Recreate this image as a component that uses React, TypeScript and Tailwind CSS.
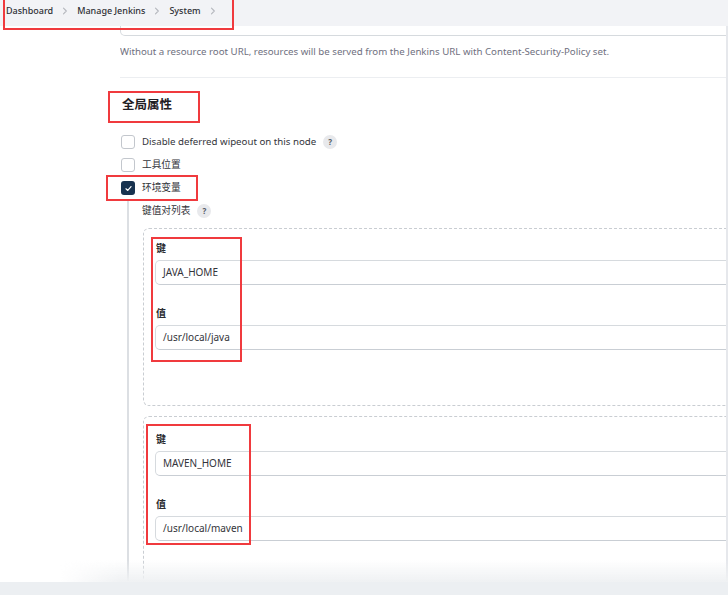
import React from "react";

const font = "font-['Noto_Sans','Noto_Sans_CJK_SC',sans-serif]";

function Chevron() {
  return (
    <svg width="8" height="8" viewBox="0 0 8 8" className="shrink-0">
      <path d="M2.5 1.2 L5.3 4 L2.5 6.8" fill="none" stroke="#b4b7bd" strokeWidth="1.1" strokeLinecap="round" strokeLinejoin="round" />
    </svg>
  );
}

function Help() {
  return (
    <span className="ml-[7px] inline-flex h-[14px] w-[14px] items-center justify-center rounded-full bg-[#e8e9ec] text-[8px] font-bold leading-none text-[#555b63]">
      ?
    </span>
  );
}

function Checkbox({ checked, label, help }: { checked?: boolean; label: string; help?: boolean }) {
  return (
    <div className="flex h-[14px] items-center">
      {checked ? (
        <span className="flex h-[14px] w-[14px] items-center justify-center rounded-[3px] bg-[#17324f]">
          <svg width="9" height="9" viewBox="0 0 10 10">
            <path d="M2.2 5.3 L4.2 7.2 L7.8 2.8" fill="none" stroke="#fff" strokeWidth="1.3" strokeLinecap="round" strokeLinejoin="round" />
          </svg>
        </span>
      ) : (
        <span className="h-[14px] w-[14px] rounded-[3px] border border-[#c3c7cd] bg-white" />
      )}
      <span className="ml-[7px] text-[9.7px] leading-[14px] text-[#33343a]">{label}</span>
      {help && <Help />}
    </div>
  );
}

function Field({ label, value }: { label: string; value: string }) {
  return (
    <div>
      <div className="ml-[1px] text-[10px] font-semibold leading-[12px] text-[#2b2c31]">{label}</div>
      <div className="mt-[6px] flex h-[25px] items-center rounded-[5px] border border-[#d6dade] border-b-[#c9ced4] bg-white pl-[7px] text-[10px] text-[#33343a]">
        {value}
      </div>
    </div>
  );
}

function Pair({ k, v, top, bottom }: { k: string; v: string; top: string; bottom: string }) {
  return (
    <div className={`rounded-[6px] border border-dashed border-[#c9cdd2] pl-[11px] pr-[11px] ${top} ${bottom}`}>
      <Field label="键" value={k} />
      <div className="mt-[22px]">
        <Field label="值" value={v} />
      </div>
    </div>
  );
}

export default function App() {
  const crumbs = ["Dashboard", "Manage Jenkins", "System"];
  return (
    <div className={`relative flex h-[595px] w-[728px] flex-col overflow-hidden bg-white ${font}`}>
      {/* breadcrumb bar */}
      <div className="flex h-[26px] shrink-0 items-center gap-[8px] bg-[#f2f3f6] pb-[4px] pl-[6px] text-[9px] font-medium text-[#2f3035]">
        {crumbs.map((c) => (
          <React.Fragment key={c}>
            <span>{c}</span>
            <Chevron />
          </React.Fragment>
        ))}
      </div>

      <div className="flex min-h-0 flex-1">
        <div className="w-[120px] shrink-0" />
        <div className="min-w-0 flex-1 overflow-hidden border-r-2 border-[#e6e8ec]">
          {/* tail of the resource root URL input */}
          <div className="-mr-[20px] h-[10px] rounded-b-[5px] border border-t-0 border-[#d6dade]" />
          <p className="mt-[10px] whitespace-nowrap text-[9.7px] leading-[12px] text-[#6f7080]">
            Without a resource root URL, resources will be served from the Jenkins URL with Content-Security-Policy set.
          </p>
          <div className="-ml-[3px] mt-[19px] h-px bg-[#eceef1]" />

          <h2 className="ml-[2px] mt-[18px] text-[12.5px] font-bold leading-[18px] text-[#1f2024]">全局属性</h2>

          <div className="ml-px mt-[21px] flex flex-col gap-[9px]">
            <Checkbox label="Disable deferred wipeout on this node" help />
            <Checkbox label="工具位置" />
            <Checkbox label="环境变量" checked />
          </div>

          {/* nested environment variable list */}
          <div className="-mr-[30px] ml-[7px] mt-[5px] border-l-2 border-[#dcdfe3] pl-[14px] pt-[4px]">
            <div className="-ml-[1px] flex h-[14px] items-center">
              <span className="text-[9.7px] leading-[14px] text-[#33343a]">键值对列表</span>
              <Help />
            </div>
            <div className="mt-[10px]">
              <Pair k="JAVA_HOME" v="/usr/local/java" top="pt-[13px]" bottom="pb-[55px]" />
            </div>
            <div className="mt-[10px]">
              <Pair k="MAVEN_HOME" v="/usr/local/maven" top="pt-[16px]" bottom="pb-[60px]" />
            </div>
          </div>
        </div>
      </div>

      {/* sticky save bar */}
      <div className="pointer-events-none absolute bottom-[13px] left-[60px] right-0 h-[22px] bg-gradient-to-b from-transparent to-[#eff1f3] [mask-image:linear-gradient(to_right,transparent,black_60px)]" />
      <div className="absolute bottom-0 left-0 right-0 h-[13px] bg-[#eceff2]" />

      {/* highlight boxes */}
      <div className="pointer-events-none absolute left-[3px] top-[-2px] h-[32px] w-[231px] border-[2.5px] border-[#f03a3e]" />
      <div className="pointer-events-none absolute left-[108px] top-[91px] h-[32px] w-[92px] border-[2.5px] border-[#f03a3e]" />
      <div className="pointer-events-none absolute left-[106px] top-[175px] h-[26px] w-[92px] border-[2.5px] border-[#f03a3e]" />
      <div className="pointer-events-none absolute left-[151px] top-[237px] h-[125px] w-[91px] border-[2.5px] border-[#f03a3e]" />
      <div className="pointer-events-none absolute left-[146px] top-[424px] h-[121px] w-[105px] border-[2.5px] border-[#f03a3e]" />
    </div>
  );
}
